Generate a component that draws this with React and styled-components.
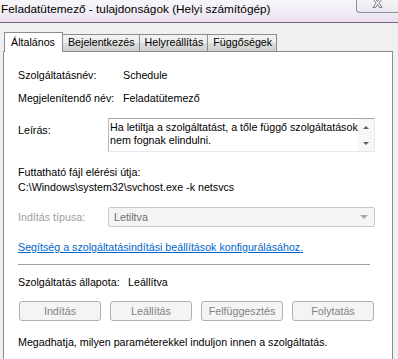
import styled, { createGlobalStyle } from "styled-components";

const GlobalStyle = createGlobalStyle`
  body {
    margin: 0;
    background: #f0f0f0;
    font-family: "Liberation Sans", Arial, sans-serif;
    font-size: 10.7px;
    color: #000;
  }
`;

const Window = styled.div`
  width: 398px;
  height: 359px;
  overflow: hidden;
  background: #f0f0f0;
`;

const TitleBar = styled.div`
  height: 22px;
  display: flex;
  justify-content: space-between;
  align-items: flex-start;
  background: linear-gradient(to bottom, #f6f6f9 0%, #f2eff6 50%, #ebdcef 100%);
  border-bottom: 1px solid #6b6b78;
`;

const Title = styled.div`
  font-size: 11.8px;
  line-height: 16px;
  padding: 1px 0 0 1px;
  white-space: nowrap;
`;

const CloseButton = styled.div`
  width: 42px;
  height: 13px;
  box-sizing: border-box;
  border: 1px solid #8e8f99;
  border-top: none;
  border-right: none;
  border-radius: 0 0 0 4px;
  background: linear-gradient(to bottom, #f4f4f7, #e9e9ef);
  display: flex;
  justify-content: center;
  align-items: flex-start;
  overflow: hidden;
`;

const Body = styled.div`
  padding: 9px 0 0 3px;
`;

const TabStrip = styled.div`
  display: flex;
  align-items: flex-end;
  position: relative;
  z-index: 1;
  margin-bottom: -1px;
  padding-left: 1px;
`;

const Tab = styled.div`
  box-sizing: border-box;
  height: ${(p) => (p.$active ? "20px" : "17px")};
  margin-bottom: ${(p) => (p.$active ? "0" : "1px")};
  margin-left: ${(p) => (p.$active ? "0" : "-1px")};
  padding: ${(p) => (p.$active ? "0 7px 0 6px" : "0 4px 0 5px")};
  border: 1px solid #898c95;
  border-bottom: none;
  background: ${(p) =>
    p.$active
      ? "#fff"
      : "linear-gradient(to bottom, #f3f3f3 0%, #ebebeb 50%, #dddddd 51%, #cfcfcf 100%)"};
  line-height: ${(p) => (p.$active ? "18px" : "15px")};
  white-space: nowrap;
  &:first-child {
    margin-left: 0;
  }
`;

const Panel = styled.div`
  width: 390px;
  height: 320px;
  box-sizing: border-box;
  background: #fff;
  border: 1px solid #898c95;
  padding: 17px 17px 0 14px;
  display: flex;
  flex-direction: column;
`;

const Row = styled.div`
  display: flex;
  align-items: ${(p) => (p.$top ? "flex-start" : "center")};
  margin-top: ${(p) => p.$mt || 0}px;
  line-height: 13px;
  white-space: nowrap;
`;

const Label = styled.div`
  width: ${(p) => p.$width}px;
  flex-shrink: 0;
  padding-top: ${(p) => p.$pt || 0}px;
  color: ${(p) => (p.$disabled ? "#9d9d9d" : "#000")};
`;

const DescBox = styled.div`
  width: 267px;
  height: 34px;
  box-sizing: border-box;
  border: 1px solid #e3e9ef;
  border-top-color: #a4a7ad;
  border-left-color: #b5b8bd;
  display: flex;
`;

const DescText = styled.div`
  flex: 1;
  padding: 2px 0 0 1px;
  line-height: 13px;
  white-space: nowrap;
`;

const ScrollCol = styled.div`
  width: 16px;
  background: #f7f7f7;
  display: flex;
  flex-direction: column;
  justify-content: space-between;
  align-items: center;
  padding: 7px 0 6px;
`;

const Arrow = styled.div`
  width: 0;
  height: 0;
  border-left: 3px solid transparent;
  border-right: 3px solid transparent;
  ${(p) =>
    p.$up
      ? "border-bottom: 3px solid #606060;"
      : "border-top: 3px solid #606060;"}
`;

const PathBlock = styled.div`
  margin-top: 13px;
  line-height: 15px;
  white-space: nowrap;
`;

const Select = styled.div`
  width: 267px;
  height: 20px;
  box-sizing: border-box;
  border: 1px solid #c9c9c9;
  border-radius: 2px;
  background: #f4f4f4;
  color: #6d6d6d;
  display: flex;
  align-items: center;
  justify-content: space-between;
  padding: 0 6px 0 5px;
`;

const SelectArrow = styled.div`
  width: 0;
  height: 0;
  border-left: 4px solid transparent;
  border-right: 4px solid transparent;
  border-top: 4px solid #a8a8a8;
`;

const HelpLink = styled.a`
  margin-top: 14px;
  line-height: 13px;
  color: #0066cc;
  text-decoration: underline;
  white-space: nowrap;
  align-self: flex-start;
`;

const Separator = styled.div`
  margin-top: 10px;
  width: 352px;
  height: 1px;
  background: #a0a0a0;
`;

const ButtonRow = styled.div`
  margin-top: 12px;
  display: flex;
  justify-content: space-between;
  padding: 0 1px 0 1px;
`;

const Button = styled.button`
  width: 82px;
  height: 20px;
  box-sizing: border-box;
  border: 1px solid #adb2b5;
  border-radius: 3px;
  background: #f4f4f4;
  color: #838383;
  font-family: inherit;
  font-size: 10.7px;
  padding: 0;
`;

const Footer = styled.div`
  margin-top: 15px;
  line-height: 13px;
  white-space: nowrap;
`;

const buttons = ["Indítás", "Leállítás", "Felfüggesztés", "Folytatás"];

export default function App() {
  return (
    <Window>
      <GlobalStyle />
      <TitleBar>
        <Title>Feladatütemező - tulajdonságok (Helyi számítógép)</Title>
        <CloseButton>
          <svg width="11" height="10" viewBox="0 0 11 10">
            <path
              d="M1 -1 L3.5 -1 L5.5 1.5 L7.5 -1 L10 -1 L6.8 3 L10 7.5 L7.5 7.5 L5.5 4.6 L3.5 7.5 L1 7.5 L4.2 3 Z"
              fill="#fafafa"
              stroke="#6a6a78"
              strokeWidth="0.9"
            />
          </svg>
        </CloseButton>
      </TitleBar>
      <Body>
        <TabStrip>
          <Tab $active>Általános</Tab>
          <Tab>Bejelentkezés</Tab>
          <Tab>Helyreállítás</Tab>
          <Tab>Függőségek</Tab>
        </TabStrip>
        <Panel>
          <Row>
            <Label $width={105}>Szolgáltatásnév:</Label>
            <span>Schedule</span>
          </Row>
          <Row $mt={10}>
            <Label $width={105}>Megjelenítendő név:</Label>
            <span>Feladatütemező</span>
          </Row>
          <Row $mt={13} $top>
            <Label $width={90} $pt={6}>Leírás:</Label>
            <DescBox>
              <DescText>
                Ha letiltja a szolgáltatást, a tőle függő szolgáltatások
                <br />
                nem fognak elindulni.
              </DescText>
              <ScrollCol>
                <Arrow $up />
                <Arrow />
              </ScrollCol>
            </DescBox>
          </Row>
          <PathBlock>
            <div>Futtatható fájl elérési útja:</div>
            <div>C:\Windows\system32\svchost.exe -k netsvcs</div>
          </PathBlock>
          <Row $mt={12}>
            <Label $width={90} $disabled>Indítás típusa:</Label>
            <Select>
              <span>Letiltva</span>
              <SelectArrow />
            </Select>
          </Row>
          <HelpLink href="#">
            Segítség a szolgáltatásindítási beállítások konfigurálásához.
          </HelpLink>
          <Separator />
          <Row $mt={11}>
            <Label $width={110}>Szolgáltatás állapota:</Label>
            <span>Leállítva</span>
          </Row>
          <ButtonRow>
            {buttons.map((b) => (
              <Button key={b} disabled>
                {b}
              </Button>
            ))}
          </ButtonRow>
          <Footer>
            Megadhatja, milyen paraméterekkel induljon innen a szolgáltatás.
          </Footer>
        </Panel>
      </Body>
    </Window>
  );
}
